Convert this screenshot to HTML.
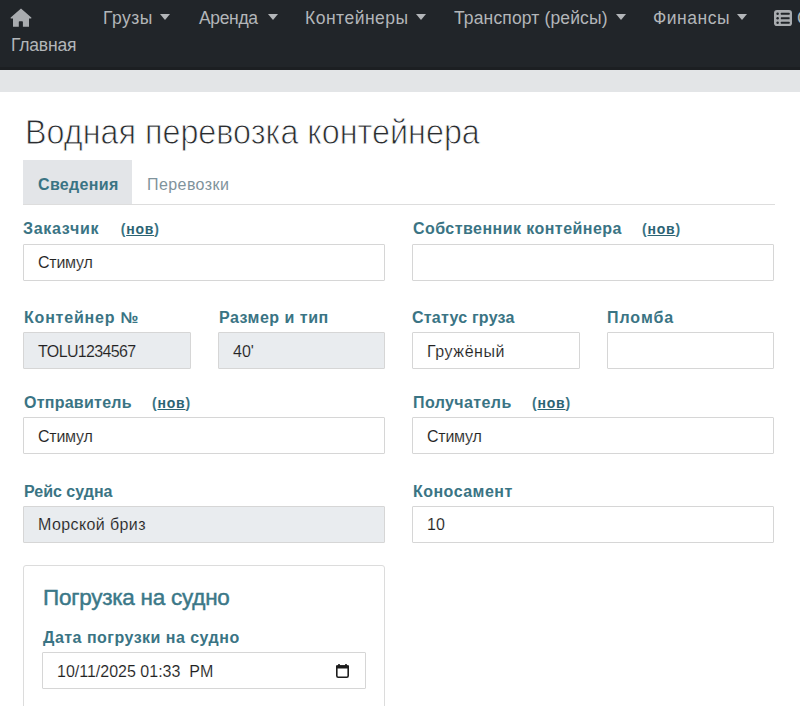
<!DOCTYPE html>
<html><head><meta charset="utf-8">
<style>
*{box-sizing:border-box;margin:0;padding:0}
html,body{width:800px;height:706px;overflow:hidden;background:#fff;font-family:"Liberation Sans",sans-serif;color:#212529}
.nav{position:absolute;left:0;top:0;width:800px;height:70px;background:#212529;border-bottom:3px solid #1c1f22}
.gbar{position:absolute;left:0;top:70px;width:800px;height:22px;background:#e3e5e7}
.t{position:absolute;white-space:nowrap;line-height:1}
.nv{color:#b3b6b9;font-size:17.5px}
.caret{position:absolute;width:0;height:0;border-left:5.2px solid transparent;border-right:5.2px solid transparent;border-top:6px solid #b3b6b9}
h1{position:absolute;left:25px;top:115px;font-weight:normal;font-size:35.5px;color:#2a2d30;-webkit-text-stroke:0.9px #fff;paint-order:normal;line-height:1;white-space:nowrap;transform-origin:0 0;transform:scaleX(0.91)}
.tab-act{position:absolute;left:23px;top:160px;width:109px;height:44px;background:#e3e5e8}
.tabline{position:absolute;left:23px;top:204px;width:752px;height:1px;background:#dddddd}
.lbl{position:absolute;white-space:nowrap;font-weight:bold;font-size:16px;color:#3a7484;line-height:1}
.lnk{position:absolute;white-space:nowrap;font-weight:bold;font-size:14px;letter-spacing:0.8px;color:#3a7484;line-height:1}
.inp{position:absolute;height:37px;border:1px solid #d6d6d6;border-radius:1px;background:#fff;font-size:16px;color:#222;-webkit-text-stroke:0.12px #fff;padding-left:14px;padding-top:0;line-height:35px;white-space:nowrap}
.inp.ro{background:#e9ecef;-webkit-text-stroke:0.12px #e9ecef}
.card{position:absolute;left:23px;top:565px;width:362px;height:160px;border:1px solid #dcdcdc;border-radius:3px}
</style></head><body>
<div class="nav">
  <svg style="position:absolute;left:0;top:0" width="40" height="32" viewBox="0 0 40 32"><path d="M21 8.6 L31.3 17.4 Q31.9 18.4 30.8 18.5 L29 18.5 V26.8 H22.9 V22 Q22.9 21.2 22.1 21.2 H19.6 Q18.8 21.2 18.8 22 V26.8 H13 V18.5 H11.2 Q10.1 18.4 10.7 17.4 Z" fill="#a9acaf"/></svg>
  <div class="t nv" style="left:11px;top:37px;letter-spacing:-0.2px">Главная</div>
  <div class="t nv" style="left:103px;top:10px;letter-spacing:0.5px">Грузы</div><div class="caret" style="left:160px;top:14px"></div>
  <div class="t nv" style="left:199px;top:10px;letter-spacing:-0.35px">Аренда</div><div class="caret" style="left:268px;top:14px"></div>
  <div class="t nv" style="left:305px;top:10px;letter-spacing:0.5px">Контейнеры</div><div class="caret" style="left:415.5px;top:14px"></div>
  <div class="t nv" style="left:454px;top:10px;letter-spacing:0.14px">Транспорт (рейсы)</div><div class="caret" style="left:615.5px;top:14px"></div>
  <div class="t nv" style="left:653px;top:10px;letter-spacing:0.5px">Финансы</div><div class="caret" style="left:737px;top:14px"></div>
  <svg style="position:absolute;left:774px;top:9.6px" width="18" height="16.2" viewBox="0 0 18 16.2"><rect x="0" y="0" width="18" height="16.2" rx="3" fill="#a9acaf"/><circle cx="3.6" cy="3.7" r="1.25" fill="#212529"/><circle cx="3.6" cy="8.2" r="1.25" fill="#212529"/><circle cx="3.6" cy="12.7" r="1.25" fill="#212529"/><rect x="6.8" y="2.7" width="8.8" height="2" rx="0.5" fill="#212529"/><rect x="6.8" y="7.2" width="8.8" height="2" rx="0.5" fill="#212529"/><rect x="6.8" y="11.7" width="8.8" height="2" rx="0.5" fill="#212529"/></svg>
  <div class="t nv" style="left:797px;top:10px">С</div>
</div>
<div class="gbar"></div>

<h1>Водная перевозка контейнера</h1>
<div class="tab-act"></div>
<div class="tabline"></div>
<div class="t" style="left:38px;top:177px;font-weight:bold;font-size:16px;color:#3a7484;letter-spacing:0.34px">Сведения</div>
<div class="t" style="left:147px;top:177px;font-size:16px;color:#7f939c;letter-spacing:0.42px">Перевозки</div>

<!-- row 1 -->
<div class="lbl" style="left:23px;top:221px;letter-spacing:0.71px">Заказчик</div>
<div class="lnk" style="left:120.7px;top:222px">(<u style="text-decoration:underline;color:#2b6373">нов</u>)</div>
<div class="inp" style="left:23px;top:244px;width:362px;letter-spacing:-0.25px">Стимул</div>
<div class="lbl" style="left:413px;top:221px;letter-spacing:0.45px">Собственник контейнера</div>
<div class="lnk" style="left:642px;top:222px">(<u style="text-decoration:underline;color:#2b6373">нов</u>)</div>
<div class="inp" style="left:412px;top:244px;width:362px"></div>

<!-- row 2 -->
<div class="lbl" style="left:24px;top:310px;letter-spacing:0.8px">Контейнер №</div>
<div class="inp ro" style="left:23px;top:332px;width:168px;letter-spacing:-0.64px;padding-top:1px">TOLU1234567</div>
<div class="lbl" style="left:219px;top:310px;letter-spacing:0.5px">Размер и тип</div>
<div class="inp ro" style="left:218px;top:332px;width:167px;padding-top:1px">40'</div>
<div class="lbl" style="left:412px;top:310px;letter-spacing:0.23px">Статус груза</div>
<div class="inp" style="left:412px;top:332px;width:168px;letter-spacing:0.57px;padding-top:1px">Гружёный</div>
<div class="lbl" style="left:607px;top:310px;letter-spacing:0.96px">Пломба</div>
<div class="inp" style="left:607px;top:332px;width:167px"></div>

<!-- row 3 -->
<div class="lbl" style="left:24px;top:395px;letter-spacing:0.25px">Отправитель</div>
<div class="lnk" style="left:152px;top:396px">(<u style="text-decoration:underline;color:#2b6373">нов</u>)</div>
<div class="inp" style="left:23px;top:417px;width:362px;letter-spacing:-0.25px;padding-top:1px">Стимул</div>
<div class="lbl" style="left:413px;top:395px;letter-spacing:0.4px">Получатель</div>
<div class="lnk" style="left:532px;top:396px">(<u style="text-decoration:underline;color:#2b6373">нов</u>)</div>
<div class="inp" style="left:412px;top:417px;width:362px;letter-spacing:-0.25px;padding-top:1px">Стимул</div>

<!-- row 4 -->
<div class="lbl" style="left:24px;top:484px">Рейс судна</div>
<div class="inp ro" style="left:23px;top:506px;width:362px;letter-spacing:0.4px">Морской бриз</div>
<div class="lbl" style="left:413px;top:484px;letter-spacing:0.47px">Коносамент</div>
<div class="inp" style="left:412px;top:506px;width:362px">10</div>

<div class="card"></div>
<div class="t" style="left:43px;top:587px;font-size:22.5px;color:#3b7888;letter-spacing:-0.25px;-webkit-text-stroke:0.45px #3b7888">Погрузка на судно</div>
<div class="lbl" style="left:43px;top:630px;letter-spacing:0.48px">Дата погрузки на судно</div>
<div class="inp" style="left:42px;top:652px;width:324px;padding-top:1px">10/11/2025 01:33 &nbsp;PM</div>
<svg style="position:absolute;left:336px;top:663.5px" width="13" height="14" viewBox="0 0 13 14"><rect x="0.8" y="2" width="11.4" height="11.2" rx="1.4" fill="none" stroke="#1c1c1c" stroke-width="1.6"/><rect x="0" y="1.2" width="13" height="3.2" rx="0.8" fill="#1c1c1c"/><rect x="2" y="0.2" width="2" height="1.6" fill="#1c1c1c"/><rect x="9" y="0.2" width="2" height="1.6" fill="#1c1c1c"/></svg>
</body></html>
